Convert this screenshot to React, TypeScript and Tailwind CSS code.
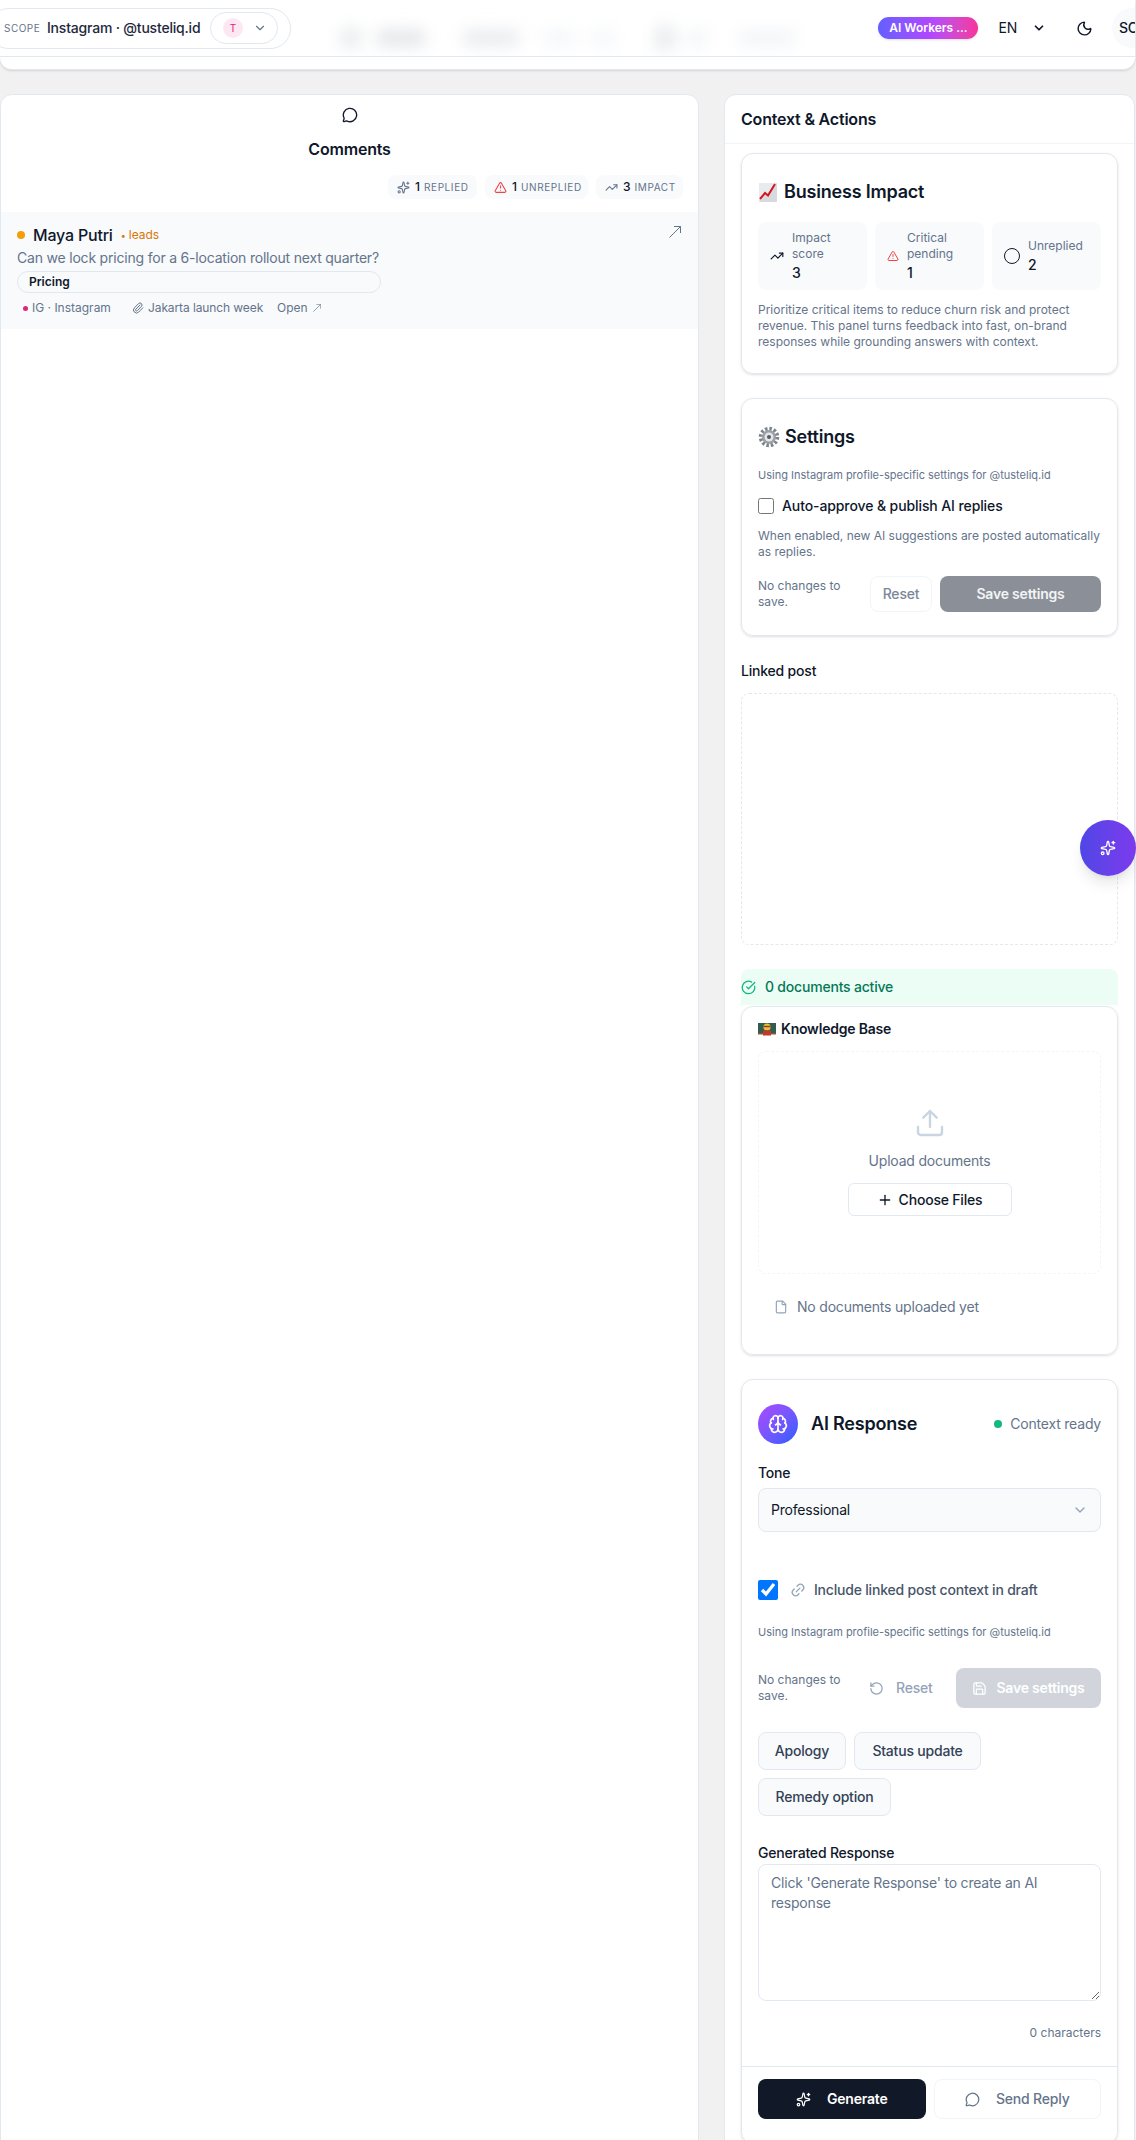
import React from "react";
import {
  Brain, ChevronDown, CircleCheckBig, File, Link2, MessageCircle, Moon, Paperclip, Plus, RotateCcw, Save, Sparkles, TrendingUp, TriangleAlert, Upload,
} from "lucide-react";

function ThinArrow({ size, className }: { size: number; className?: string }) {
  return (
    <svg width={size} height={size} viewBox="0 0 12 12" fill="none" stroke="currentColor" strokeWidth="1" className={className}>
      <path d="M0.5 11.5 L11.5 0.5 M5 0.5 H11.5 V7" />
    </svg>
  );
}

function ChartEmoji() {
  return (
    <svg width="20" height="20" viewBox="0 0 20 20" className="shrink-0">
      <rect x="1" y="1" width="18" height="19" fill="#e8ebee" />
      <path d="M1 20 L19 20 L19 1" fill="#c9ced4" opacity="0.6" />
      <path d="M2 17 L7 11 L10 13.5 L17 2" fill="none" stroke="#d5141c" strokeWidth="2" />
    </svg>
  );
}

function GearEmoji() {
  return (
    <svg width="22" height="22" viewBox="0 0 22 22" className="shrink-0">
      <circle cx="11" cy="11" r="8" fill="none" stroke="#7d848c" strokeWidth="4.5" strokeDasharray="2.4 1.8" />
      <circle cx="11" cy="11" r="7" fill="#9aa0a6" />
      <circle cx="11" cy="11" r="4.5" fill="#e4e6e8" />
      <circle cx="11" cy="11" r="2" fill="#555b62" />
    </svg>
  );
}

function TeacherEmoji() {
  return (
    <svg width="18" height="14" viewBox="0 0 18 14" className="shrink-0">
      <rect x="0" y="1" width="18" height="11" fill="#2f5d50" />
      <rect x="0" y="11" width="18" height="1.5" fill="#8a5a2b" />
      <circle cx="9" cy="5" r="3.6" fill="#f5b93c" />
      <rect x="5" y="8.5" width="8" height="5" fill="#c0392b" />
      <rect x="5.5" y="3.8" width="7" height="1.4" fill="#6b4a1f" />
    </svg>
  );
}

function Stat({ icon, label, value }: { icon: React.ReactNode; label: React.ReactNode; value: string }) {
  return (
    <div className="h-[68px] rounded-lg bg-[#f8fafc] pl-3 flex items-center gap-2">
      {icon}
      <div>
        <div className="text-xs leading-4 tracking-normal text-[#64748b]">{label}</div>
        <div className="mt-px text-sm leading-5 font-medium text-[#0f172a]">{value}</div>
      </div>
    </div>
  );
}

function Chip({ icon, n, label, w }: { icon: React.ReactNode; n: string; label: string; w: string }) {
  return (
    <div className={`h-6 pl-[9px] rounded-lg bg-[#f8fafc] flex items-center ${w}`}>
      {icon}
      <span className="ml-[5px] text-xs font-medium tracking-normal text-[#0f172a]">{n}</span>
      <span className="ml-1 text-[10px] tracking-[0.06em] text-[#64748b]">{label}</span>
    </div>
  );
}

export default function App() {
  return (
    <div className="relative w-[1136px] h-[2140px] overflow-hidden bg-[#f1f1f2] font-[family-name:Inter,sans-serif] tracking-[-0.2px] text-[#0f172a]">
      {/* Top panel */}
      <div className="h-[70px] mr-px bg-white rounded-b-xl border-b border-[#e2e8f0] shadow-sm">
        <div className="h-[57px] border-b border-[#e2e8f0] flex items-center overflow-hidden">
          <div className="-ml-3 h-[41px] w-[303px] pl-[15px] rounded-full border border-[#e2e8f0] flex items-center shrink-0">
            <span className="w-[34px] text-[10px] tracking-[0.05em] text-[#64748b]">SCOPE</span>
            <span className="ml-[9px] w-[155px] whitespace-nowrap text-sm font-medium text-[#1e293b]">Instagram · @tusteliq.id</span>
            <div className="ml-2 h-8 w-[68px] pl-3 rounded-full border border-[#e2e8f0] flex items-center gap-[10px]">
              <div className="w-5 h-5 rounded-full bg-[#fce7f3] text-[#db2777] text-[10px] flex items-center justify-center">T</div>
              <ChevronDown size={14} className="text-[#64748b]" />
            </div>
          </div>
          <div className="ml-[50px] mt-[20px] flex items-center blur-[8px]">
            <div className="w-5 h-5 rounded bg-[#e9ebee]" />
            <div className="ml-4 w-12 h-4 rounded bg-[#e3e5e9]" />
            <div className="ml-[38px] w-14 h-4 rounded bg-[#e9ebee]" />
            <div className="ml-6 w-8 h-4 rounded bg-[#f5f7fa]" />
            <div className="ml-4 w-6 h-4 rounded bg-[#f5f7fa]" />
            <div className="ml-10 w-5 h-6 rounded bg-[#e9ebee]" />
            <div className="ml-3 w-5 h-4 rounded bg-[#f3f5f8]" />
            <div className="ml-8 w-14 h-4 rounded bg-[#f3f5f8]" />
          </div>
          <div className="ml-auto h-[22px] w-[100px] rounded-full bg-linear-to-r from-indigo-500 via-purple-500 to-pink-500 shadow-sm flex items-center justify-center text-xs font-semibold tracking-normal text-white shrink-0">
            AI Workers ...
          </div>
          <span className="ml-5 text-sm text-[#0f172a]">EN</span>
          <ChevronDown size={14} strokeWidth={3} className="ml-[15px] text-[#0f172a] shrink-0" />
          <Moon size={17} className="ml-[30px] text-[#0f172a] shrink-0" />
          <div className="ml-[19px] -mr-[17px] w-10 h-10 rounded-full bg-[#f8fafc] pl-[7px] flex items-center text-sm font-medium shrink-0">SC</div>
        </div>
      </div>

      <div className="mt-6 pr-px flex gap-[25px] items-start">
        {/* Left panel */}
        <div className="w-[699px] h-[2100px] bg-white rounded-t-xl border border-[#e2e8f0] flex flex-col items-center pt-3 shrink-0">
          <MessageCircle size={16} className="text-[#0f172a]" />
          <h2 className="mt-[14px] text-base leading-6 font-semibold text-[#0f172a]">Comments</h2>
          <div className="mt-[14px] self-end pr-[15px] flex gap-2">
            <Chip w="w-[89px]" icon={<Sparkles size={13} className="text-[#64748b]" />} n="1" label="REPLIED" />
            <Chip w="w-[103px]" icon={<TriangleAlert size={13} className="text-[#ef4444]" />} n="1" label="UNREPLIED" />
            <Chip w="w-[87px]" icon={<TrendingUp size={13} className="text-[#64748b]" />} n="3" label="IMPACT" />
          </div>
          <div className="mt-[13px] w-full h-[117px] bg-[#f8fafc] px-4 pt-[13px] relative">
            <div className="flex items-center h-5">
              <span className="w-2 h-2 rounded-full bg-[#f59e0b]" />
              <span className="ml-2 text-base font-medium text-[#0f172a]">Maya Putri</span>
              <span className="ml-2 text-xs tracking-normal text-[#d97706]"><span className="text-[9px] mr-[3px]">•</span>leads</span>
            </div>
            <ThinArrow size={12} className="absolute right-[17px] top-[14px] text-[#64748b]" />
            <p className="mt-[3px] text-sm leading-5 text-[#64748b]">Can we lock pricing for a 6-location rollout next quarter?</p>
            <div className="mt-[3px] w-[364px] h-[22px] rounded-full border border-[#e2e8f0] pl-[11px] flex items-center text-xs font-semibold tracking-normal text-[#0f172a]">Pricing</div>
            <div className="mt-[5px] flex items-center gap-2 text-xs tracking-normal text-[#64748b]">
              <div className="h-[20px] w-[101px] rounded bg-[#f8fafc] pl-1 flex items-center gap-[4px]">
                <span className="w-[5px] h-[5px] ml-[2px] rounded-full bg-[#db2777]" />IG · Instagram
              </div>
              <div className="h-[20px] w-[143px] rounded bg-[#f8fafc] pl-[6px] flex items-center gap-[4px] tracking-[-0.1px]">
                <Paperclip size={12} />Jakarta launch week
              </div>
              <div className="flex items-center gap-[5px]">Open <ThinArrow size={8} /></div>
            </div>
          </div>
        </div>

        {/* Right panel */}
        <div className="flex-1 h-[2100px] bg-white rounded-t-xl border border-[#e2e8f0]">
          <div className="h-[49px] border-b border-[#f1f5f9] px-4 pt-3 text-base leading-6 font-semibold text-[#0f172a]">Context &amp; Actions</div>
          <div className="px-4 pt-[9px] flex flex-col">
            {/* Business impact */}
            <section className="rounded-xl border border-[#e2e8f0] shadow-sm px-4 pt-6 pb-[23px]">
              <h3 className="flex items-center gap-[6px] text-lg leading-7 font-semibold text-[#0f172a]"><ChartEmoji />Business Impact</h3>
              <div className="mt-4 grid grid-cols-3 gap-2">
                <Stat icon={<TrendingUp size={14} className="text-[#0f172a] shrink-0" />} label={<>Impact<br />score</>} value="3" />
                <Stat icon={<TriangleAlert size={12} className="text-[#ef4444] shrink-0" />} label={<>Critical<br />pending</>} value="1" />
                <Stat icon={<span className="w-4 h-4 rounded-full border-[1.5px] border-[#0f172a] shrink-0" />} label="Unreplied" value="2" />
              </div>
              <p className="mt-3 text-xs leading-4 tracking-normal text-[#64748b]">Prioritize critical items to reduce churn risk and protect revenue. This panel turns feedback into fast, on-brand responses while grounding answers with context.</p>
            </section>

            {/* Settings */}
            <section className="mt-6 rounded-xl border border-[#e2e8f0] shadow-sm px-4 pt-6 pb-[23px]">
              <h3 className="flex items-center gap-[5px] text-lg leading-7 font-semibold text-[#0f172a]"><GearEmoji />Settings</h3>
              <p className="mt-4 text-[11px] leading-4 tracking-normal text-[#64748b]">Using Instagram profile-specific settings for @tusteliq.id</p>
              <label className="mt-[13px] flex items-center gap-2 text-sm leading-5 font-medium tracking-[-0.1px] text-[#0f172a]">
                <input type="checkbox" className="w-4 h-4 m-0" />Auto-approve &amp; publish AI replies
              </label>
              <p className="mt-3 text-xs leading-4 tracking-normal text-[#64748b]">When enabled, new AI suggestions are posted automatically as replies.</p>
              <div className="mt-4 flex items-center gap-2">
                <p className="flex-1 text-xs leading-4 tracking-normal text-[#64748b]">No changes to<br />save.</p>
                <button className="w-[62px] h-9 rounded-lg border border-[#f1f5f9] text-sm font-medium text-[#7b8798]">Reset</button>
                <button className="w-[161px] h-9 rounded-lg bg-[#8a8f98] text-sm font-semibold text-white/90">Save settings</button>
              </div>
            </section>

            {/* Linked post */}
            <h4 className="mt-[25px] text-sm leading-5 font-medium text-[#0f172a]">Linked post</h4>
            <div className="mt-3 h-[252px] rounded-lg border border-dashed border-[#e2e8f0]" />

            {/* Documents */}
            <div className="mt-6 h-9 rounded-t-lg bg-[#ecfdf5] flex items-center gap-[9px] text-sm font-medium text-[#047857]">
              <CircleCheckBig size={15} className="text-[#10b981]" />0 documents active
            </div>
            <section className="mt-px h-[349px] rounded-xl border border-[#e2e8f0] shadow-sm px-4 pt-3">
              <h4 className="flex items-center gap-[5px] text-sm leading-5 font-semibold text-[#0f172a]"><TeacherEmoji />Knowledge Base</h4>
              <div className="mt-3 h-[223px] rounded-lg border border-dashed border-[#f3f5f8] flex flex-col items-center pt-[55px]">
                <Upload size={32} strokeWidth={1.8} className="text-[#cbd5e1]" />
                <span className="mt-3 text-sm leading-5 text-[#64748b]">Upload documents</span>
                <button className="mt-3 w-[164px] h-[33px] rounded-md border border-[#e2e8f0] flex items-center justify-center gap-[6px] text-sm font-medium text-[#0f172a]"><Plus size={16} />Choose Files</button>
              </div>
              <div className="mt-[23px] pl-4 flex items-center gap-[9px] text-sm leading-5 text-[#64748b]">
                <File size={14} className="text-[#94a3b8]" />No documents uploaded yet
              </div>
            </section>

            {/* AI response */}
            <section className="mt-6 rounded-xl border border-[#e2e8f0] shadow-sm pt-6">
              <div className="px-4">
                <div className="flex items-center">
                  <div className="w-10 h-10 rounded-full bg-linear-to-br from-purple-500 to-blue-600 flex items-center justify-center">
                    <Brain size={20} className="text-white" />
                  </div>
                  <h3 className="ml-[13px] text-lg leading-7 font-semibold text-[#0f172a]">AI Response</h3>
                  <span className="ml-auto w-2 h-2 rounded-full bg-[#10b981]" />
                  <span className="ml-2 text-sm text-[#64748b]">Context ready</span>
                </div>
                <div className="mt-[19px] text-sm leading-5 font-medium text-[#0f172a]">Tone</div>
                <div className="mt-[5px] h-11 rounded-lg border border-[#e2e8f0] bg-[#f8fafc] px-3 flex items-center justify-between text-sm text-[#0f172a]">
                  Professional
                  <ChevronDown size={16} className="text-[#94a3b8]" />
                </div>
                <label className="mt-12 flex items-center text-sm leading-5 font-medium text-[#475569]">
                  <input type="checkbox" defaultChecked className="w-5 h-5 m-0" />
                  <Link2 size={16} className="ml-3 text-[#94a3b8] -rotate-45" />
                  <span className="ml-2">Include linked post context in draft</span>
                </label>
                <p className="mt-[24px] text-[11px] leading-4 tracking-normal text-[#64748b]">Using Instagram profile-specific settings for @tusteliq.id</p>
                <div className="mt-7 flex items-center">
                  <p className="flex-1 text-xs leading-4 tracking-normal text-[#64748b]">No changes to<br />save.</p>
                  <div className="w-[87px] flex items-center gap-3 text-sm font-medium text-[#94a3b8]"><RotateCcw size={15} />Reset</div>
                  <button className="w-[145px] h-10 rounded-lg bg-[#d1d5db] flex items-center justify-center gap-[9px] text-sm font-semibold text-white"><Save size={15} />Save settings</button>
                </div>
                <div className="mt-6 flex flex-wrap gap-x-2 gap-y-2">
                  <button className="h-[38px] w-[88px] rounded-lg border border-[#e2e8f0] bg-[#f8fafc] text-sm font-medium text-[#334155]">Apology</button>
                  <button className="h-[38px] w-[127px] rounded-lg border border-[#e2e8f0] bg-[#f8fafc] text-sm font-medium text-[#334155]">Status update</button>
                  <button className="h-[38px] w-[133px] rounded-lg border border-[#e2e8f0] bg-[#f8fafc] text-sm font-medium text-[#334155]">Remedy option</button>
                </div>
                <div className="mt-[27px] text-sm leading-5 font-medium text-[#0f172a]">Generated Response</div>
                <textarea
                  className="block mt-px w-full h-[137px] rounded-lg border border-[#e2e8f0] px-3 py-2 text-sm leading-5 placeholder:text-[#64748b] outline-none"
                  placeholder="Click 'Generate Response' to create an AI response"
                />
                <div className="mt-6 text-right text-xs leading-4 tracking-normal text-[#64748b]">0 characters</div>
              </div>
              <div className="mt-[25px] border-t border-[#e2e8f0] px-4 pt-3 pb-6 grid grid-cols-2 gap-2">
                <button className="h-10 rounded-lg bg-[#111827] flex items-center justify-center gap-4 text-sm font-semibold text-white"><Sparkles size={15} />Generate</button>
                <button className="h-10 rounded-lg border border-[#f1f5f9] flex items-center justify-center gap-4 text-sm font-medium text-[#64748b]"><MessageCircle size={15} />Send Reply</button>
              </div>
            </section>
          </div>
        </div>
      </div>

      {/* Floating button */}
      <button className="absolute left-[1080px] top-[820px] w-14 h-14 rounded-full bg-linear-to-r from-[#4f46e5] to-[#7c3aed] shadow-lg flex items-center justify-center text-white">
        <Sparkles size={16} />
      </button>
    </div>
  );
}
